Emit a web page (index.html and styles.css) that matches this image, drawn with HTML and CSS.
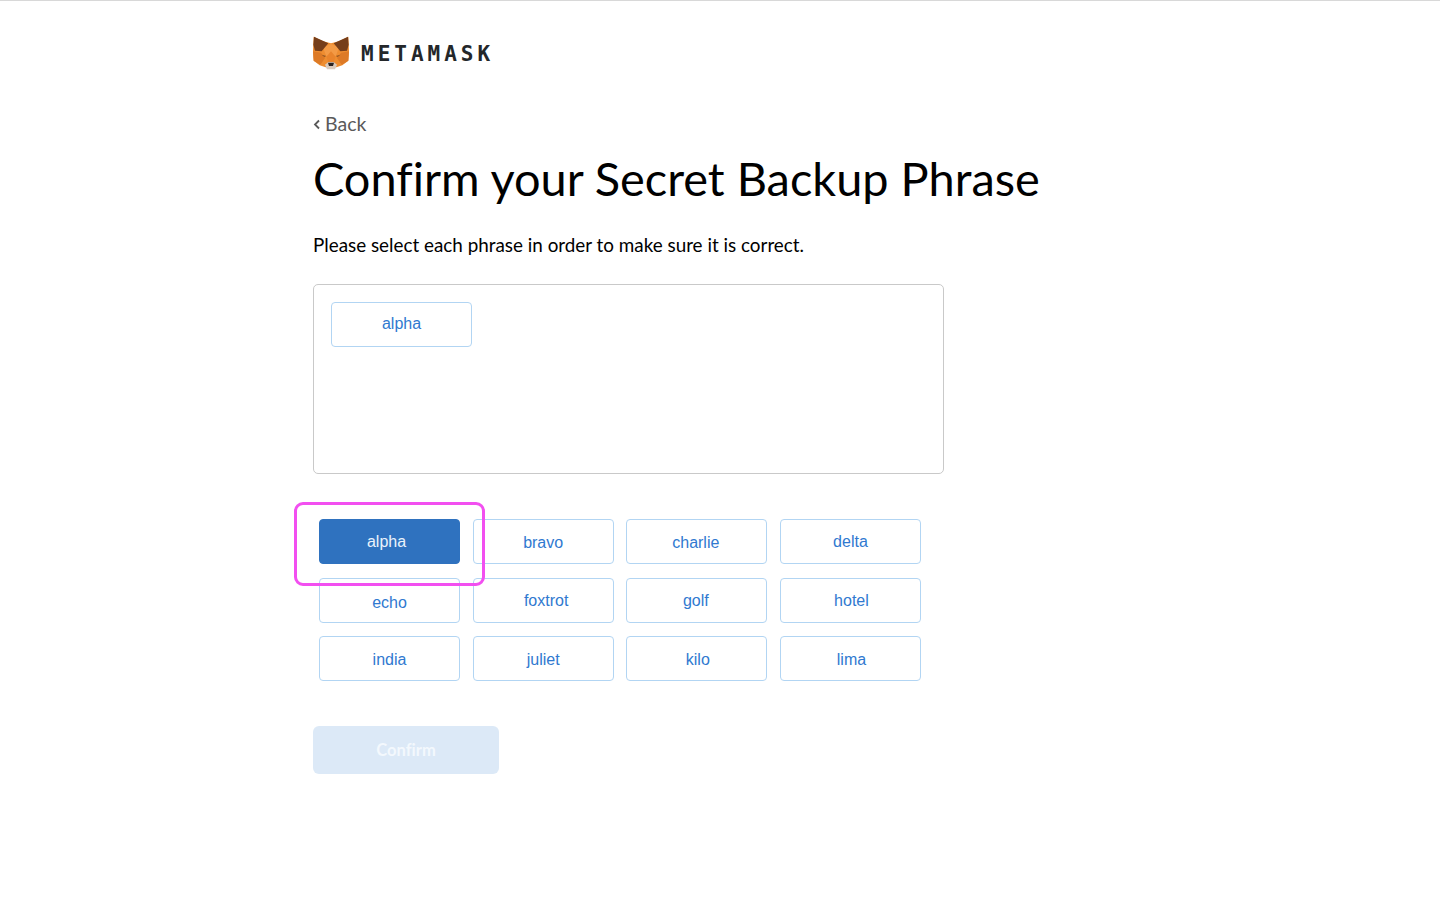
FILE: index.html
```html
<!DOCTYPE html>
<html lang="en">
<head>
<meta charset="utf-8">
<title>Confirm your Secret Backup Phrase</title>
<link rel="stylesheet" href="styles.css">
</head>
<body>
<main class="page">
  <header class="brand">
    <svg class="fox" viewBox="0 0 108 102" aria-hidden="true">
      <polygon fill="#ee8d30" points="0,44 2,2 30,16 54,22 78,16 106,2 108,44 106,74 88,88 70,94 38,94 20,88 2,74"/>
      <polygon fill="#f39a45" points="30,34 54,24 78,34 68,62 40,62"/>
      <polygon fill="#763e1a" points="3,2 46,22 26,46 6,44 1,26"/>
      <polygon fill="#763e1a" points="105,2 62,22 82,46 102,44 107,26"/>
      <polygon fill="#dd7a26" points="0,46 24,50 36,66 22,86 2,74"/>
      <polygon fill="#dd7a26" points="108,46 84,50 72,66 86,86 106,74"/>
      <polygon fill="#e9842c" points="40,62 54,46 68,62 62,78 46,78"/>
      <polygon fill="#8f5424" points="26,56 40,60 34,63"/>
      <polygon fill="#8f5424" points="82,56 68,60 74,63"/>
      <polygon fill="#d9cabd" points="36,86 46,78 62,78 72,86 66,100 42,100"/>
      <polygon fill="#2b2320" points="45,80 63,80 60,90 48,90"/>
    </svg>
    <span class="wordmark">METAMASK</span>
  </header>
  <a class="back" href="#"><svg class="chev" viewBox="0 0 7 11" aria-hidden="true"><path d="M6 1.5 2 5.5l4 4" fill="none" stroke="#5a5a5a" stroke-width="1.8"/></svg>Back</a>
  <h1 class="title">Confirm your Secret Backup Phrase</h1>
  <p class="intro">Please select each phrase in order to make sure it is correct.</p>
  <section class="picked">
    <button class="word">alpha</button>
  </section>
  <section class="options">
    <div class="highlight"></div>
    <button class="word selected shift-l3 mid">alpha</button>
    <button class="word low">bravo</button>
    <button class="word shift-l1 low">charlie</button>
    <button class="word mid">delta</button>
    <button class="word lowest">echo</button>
    <button class="word shift-r3 low">foxtrot</button>
    <button class="word shift-l1 low">golf</button>
    <button class="word shift-r1 low">hotel</button>
    <button class="word low">india</button>
    <button class="word low">juliet</button>
    <button class="word shift-r1 low">kilo</button>
    <button class="word shift-r1 low">lima</button>
  </section>
  <button class="confirm" disabled>Confirm</button>
</main>
</body>
</html>
```
FILE: styles.css
```css
* { box-sizing: border-box; }
html, body { margin: 0; height: 100%; background: #fff; }
body { border-top: 1px solid #d8d8d8; overflow: hidden; }
.page {
  position: relative;
  display: flex;
  flex-direction: column;
  align-items: flex-start;
  padding: 35px 0 0 313px;
  font-family: Lato, "Noto Sans", sans-serif;
  font-variant-ligatures: none;
}
.brand { display: flex; align-items: center; gap: 12px; height: 34px; }
.fox { width: 36px; height: 34px; display: block; }
.wordmark {
  padding-top: 2px;
  font-family: "DejaVu Sans Mono", monospace;
  font-weight: 700;
  font-size: 21px;
  letter-spacing: 4px;
  color: #24272a;
}
.back {
  display: flex;
  align-items: center;
  margin-top: 43px;
  font-size: 19.5px;
  line-height: 22px;
  color: #5a5a5a;
  text-decoration: none;
}
.chev { display: block; width: 7px; height: 11px; margin-right: 5px; }
.title {
  margin: 15px 0 0;
  font-size: 46.9px;
  line-height: 56px;
  font-weight: 400;
  color: #000;
  white-space: nowrap;
}
.intro {
  margin: 28px 0 0;
  font-size: 18.85px;
  line-height: 22px;
  color: #000;
}
.picked {
  margin-top: 28px;
  width: 631px;
  height: 190px;
  border: 1px solid #c9c9c9;
  border-radius: 5px;
  padding: 17px;
}
.word {
  display: block;
  width: 141px;
  height: 45px;
  padding: 0 0 2px;
  border: 1px solid #b2d5f3;
  border-radius: 4px;
  background: #fff;
  color: #3079d0;
  font-family: "Liberation Sans", Arial, sans-serif;
  font-size: 16px;
  line-height: 20px;
  text-align: center;
}
.options {
  margin: 45px 0 0 6px;
  display: grid;
  grid-template-columns: repeat(4, 141px);
  column-gap: 12.67px;
  row-gap: 13.5px;
}
.selected { background: #2f72bf; border-color: #2f72bf; color: #eaf2fb; }
.mid { padding: 0; }
.low { padding: 2px 0 0; }
.lowest { padding: 6px 0 0; }
.shift-l3 { padding-right: 6px; }
.shift-l1 { padding-right: 2px; }
.shift-r1 { padding-left: 2px; }
.shift-r3 { padding-left: 6px; }
.highlight {
  position: absolute;
  left: 294px;
  top: 501px;
  width: 191px;
  height: 84px;
  border: 3px solid #f24ff0;
  border-radius: 9px;
  z-index: 2;
  pointer-events: none;
}
.confirm {
  margin-top: 45px;
  width: 186px;
  height: 47.5px;
  padding: 0;
  border: 0;
  border-radius: 6px;
  background: #dce9f7;
  color: #f3f8fd;
  font-family: Lato, "Noto Sans", sans-serif;
  font-size: 16.5px;
  font-weight: 700;
  font-variant-ligatures: none;
}
```
